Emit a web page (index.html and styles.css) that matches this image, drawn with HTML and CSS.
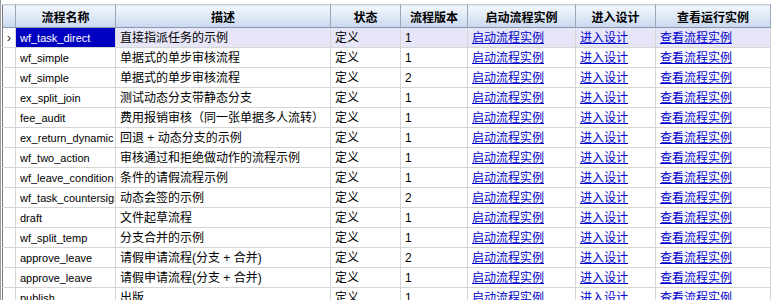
FILE: index.html
```html
<!DOCTYPE html>
<html lang="zh">
<head>
<meta charset="utf-8">
<title>流程列表</title>
<link rel="stylesheet" href="styles.css">
</head>
<body>
<div class="frame">
<table class="grid">
<colgroup>
<col class="c-rh"><col class="c-name"><col class="c-desc"><col class="c-state"><col class="c-ver"><col class="c-start"><col class="c-design"><col class="c-view">
</colgroup>
<thead>
<tr><th class="rh"></th><th>流程名称</th><th>描述</th><th>状态</th><th>流程版本</th><th>启动流程实例</th><th>进入设计</th><th>查看运行实例</th></tr>
</thead>
<tbody>
<tr class="sel"><td class="rh">›</td><td class="name">wf_task_direct</td><td>直接指派任务的示例</td><td>定义</td><td class="num">1</td><td><a href="#">启动流程实例</a></td><td><a href="#">进入设计</a></td><td><a href="#">查看流程实例</a></td></tr>
<tr><td class="rh"></td><td class="name">wf_simple</td><td>单据式的单步审核流程</td><td>定义</td><td class="num">1</td><td><a href="#">启动流程实例</a></td><td><a href="#">进入设计</a></td><td><a href="#">查看流程实例</a></td></tr>
<tr><td class="rh"></td><td class="name">wf_simple</td><td>单据式的单步审核流程</td><td>定义</td><td class="num">2</td><td><a href="#">启动流程实例</a></td><td><a href="#">进入设计</a></td><td><a href="#">查看流程实例</a></td></tr>
<tr><td class="rh"></td><td class="name">ex_split_join</td><td>测试动态分支带静态分支</td><td>定义</td><td class="num">1</td><td><a href="#">启动流程实例</a></td><td><a href="#">进入设计</a></td><td><a href="#">查看流程实例</a></td></tr>
<tr><td class="rh"></td><td class="name">fee_audit</td><td>费用报销审核（同一张单据多人流转）</td><td>定义</td><td class="num">1</td><td><a href="#">启动流程实例</a></td><td><a href="#">进入设计</a></td><td><a href="#">查看流程实例</a></td></tr>
<tr><td class="rh"></td><td class="name">ex_return_dynamic</td><td>回退 + 动态分支的示例</td><td>定义</td><td class="num">1</td><td><a href="#">启动流程实例</a></td><td><a href="#">进入设计</a></td><td><a href="#">查看流程实例</a></td></tr>
<tr><td class="rh"></td><td class="name">wf_two_action</td><td>审核通过和拒绝做动作的流程示例</td><td>定义</td><td class="num">1</td><td><a href="#">启动流程实例</a></td><td><a href="#">进入设计</a></td><td><a href="#">查看流程实例</a></td></tr>
<tr><td class="rh"></td><td class="name">wf_leave_condition</td><td>条件的请假流程示例</td><td>定义</td><td class="num">1</td><td><a href="#">启动流程实例</a></td><td><a href="#">进入设计</a></td><td><a href="#">查看流程实例</a></td></tr>
<tr><td class="rh"></td><td class="name">wf_task_countersign</td><td>动态会签的示例</td><td>定义</td><td class="num">2</td><td><a href="#">启动流程实例</a></td><td><a href="#">进入设计</a></td><td><a href="#">查看流程实例</a></td></tr>
<tr><td class="rh"></td><td class="name">draft</td><td>文件起草流程</td><td>定义</td><td class="num">1</td><td><a href="#">启动流程实例</a></td><td><a href="#">进入设计</a></td><td><a href="#">查看流程实例</a></td></tr>
<tr><td class="rh"></td><td class="name">wf_split_temp</td><td>分支合并的示例</td><td>定义</td><td class="num">1</td><td><a href="#">启动流程实例</a></td><td><a href="#">进入设计</a></td><td><a href="#">查看流程实例</a></td></tr>
<tr><td class="rh"></td><td class="name">approve_leave</td><td>请假申请流程(分支 + 合并)</td><td>定义</td><td class="num">2</td><td><a href="#">启动流程实例</a></td><td><a href="#">进入设计</a></td><td><a href="#">查看流程实例</a></td></tr>
<tr><td class="rh"></td><td class="name">approve_leave</td><td>请假申请流程(分支 + 合并)</td><td>定义</td><td class="num">1</td><td><a href="#">启动流程实例</a></td><td><a href="#">进入设计</a></td><td><a href="#">查看流程实例</a></td></tr>
<tr><td class="rh"></td><td class="name">publish</td><td>出版</td><td>定义</td><td class="num">1</td><td><a href="#">启动流程实例</a></td><td><a href="#">进入设计</a></td><td><a href="#">查看流程实例</a></td></tr>
</tbody>
</table>
</div>
</body>
</html>
```
FILE: styles.css
```css
html, body {
  margin: 0;
  padding: 0;
  background: #ffffff;
  overflow: hidden;
}
body {
  font-family: "Liberation Sans", "Noto Sans CJK SC", sans-serif;
  font-size: 12px;
  color: #000;
}
.frame {
  border-left: 1px solid #9c9c9c;
  padding-left: 1px;
  padding-top: 4px;
  height: 296px;
  background: #fff;
}
.grid {
  border-collapse: collapse;
  table-layout: fixed;
  width: 768px;
  border-left: 1px solid #7a7a7a;
}
.c-rh { width: 13px; }
.c-name { width: 100px; }
.c-desc { width: 215px; }
.c-state { width: 70px; }
.c-ver { width: 67px; }
.c-start { width: 108px; }
.c-design { width: 80px; }
.c-view { width: 115px; }
.grid th {
  height: 22px;
  padding: 0;
  font-weight: bold;
  font-size: 12px;
  text-align: center;
  color: #000;
  background: linear-gradient(#f2f6fc, #dde7f6 55%, #c9d8ef);
  border-right: 1px solid #9aa7ba;
  border-bottom: 1px solid #8c98ab;
  border-top: 1px solid #c4ccd8;
}
.grid td {
  height: 19px;
  padding: 0 0 0 4px;
  border: 1px solid #d6d6d6;
  white-space: nowrap;
  overflow: hidden;
  text-overflow: clip;
  line-height: 18px;
}
.grid td.rh {
  padding: 0;
  text-align: center;
  font-size: 13px;
  color: #333;
  border-left: none;
}
.grid td.name {
  font-size: 11px;
}
.grid tr.sel td {
  background: #e6e6f8;
}
.grid tr.sel td.rh {
  background: #ffffff;
}
.grid tr.sel td.name {
  background: #0000c0;
  color: #fff;
}
.grid a {
  color: #0000cc;
  text-decoration: underline;
}
```
